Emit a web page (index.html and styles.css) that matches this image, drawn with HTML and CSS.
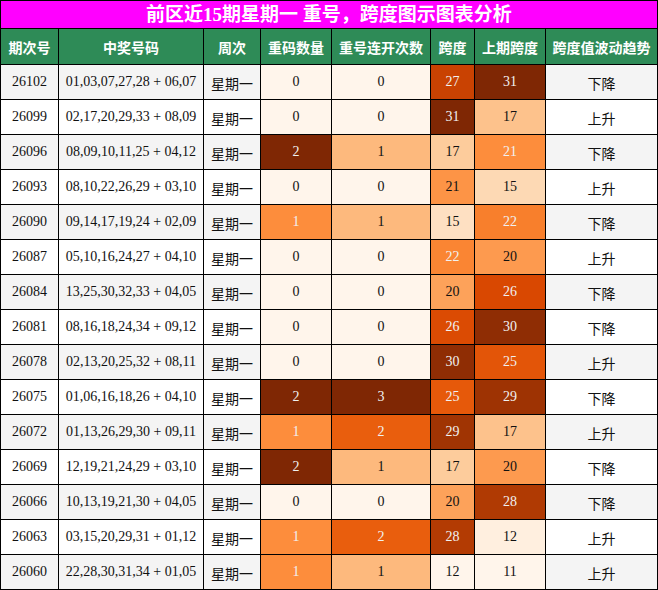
FILE: index.html
```html
<!DOCTYPE html>
<html lang="zh">
<head>
<meta charset="utf-8">
<link rel="stylesheet" href="styles.css">
</head>
<body>
<div class="sheet">
  <div class="title">前区近15期星期一 重号，跨度图示图表分析</div>
  <div class="hd">期次号</div><div class="hd">中奖号码</div><div class="hd">周次</div><div class="hd">重码数量</div><div class="hd">重号连开次数</div><div class="hd">跨度</div><div class="hd">上期跨度</div><div class="hd">跨度值波动趋势</div>

  <div class="row odd"><div class="c">26102</div><div class="c">01,03,07,27,28 + 06,07</div><div class="c cjk">星期一</div><div class="c" style="background:#fff5eb">0</div><div class="c" style="background:#fff5eb">0</div><div class="c lt" style="background:#c94202">27</div><div class="c lt" style="background:#7f2704">31</div><div class="c cjk">下降</div></div>
  <div class="row"><div class="c">26099</div><div class="c">02,17,20,29,33 + 08,09</div><div class="c cjk">星期一</div><div class="c" style="background:#fff5eb">0</div><div class="c" style="background:#fff5eb">0</div><div class="c lt" style="background:#7f2704">31</div><div class="c" style="background:#fdc28c">17</div><div class="c cjk">上升</div></div>
  <div class="row odd"><div class="c">26096</div><div class="c">08,09,10,11,25 + 04,12</div><div class="c cjk">星期一</div><div class="c lt" style="background:#7f2704">2</div><div class="c" style="background:#fdb97d">1</div><div class="c" style="background:#fdcc9c">17</div><div class="c lt" style="background:#fd8d3c">21</div><div class="c cjk">下降</div></div>
  <div class="row"><div class="c">26093</div><div class="c">08,10,22,26,29 + 03,10</div><div class="c cjk">星期一</div><div class="c" style="background:#fff5eb">0</div><div class="c" style="background:#fff5eb">0</div><div class="c" style="background:#fd9446">21</div><div class="c" style="background:#fdd9b4">15</div><div class="c cjk">上升</div></div>
  <div class="row odd"><div class="c">26090</div><div class="c">09,14,17,19,24 + 02,09</div><div class="c cjk">星期一</div><div class="c lt" style="background:#fd8d3c">1</div><div class="c" style="background:#fdb97d">1</div><div class="c" style="background:#fee0c2">15</div><div class="c lt" style="background:#f87f2c">22</div><div class="c cjk">下降</div></div>
  <div class="row"><div class="c">26087</div><div class="c">05,10,16,24,27 + 04,10</div><div class="c cjk">星期一</div><div class="c" style="background:#fff5eb">0</div><div class="c" style="background:#fff5eb">0</div><div class="c lt" style="background:#fa8533">22</div><div class="c" style="background:#fd9a4f">20</div><div class="c cjk">上升</div></div>
  <div class="row odd"><div class="c">26084</div><div class="c">13,25,30,32,33 + 04,05</div><div class="c cjk">星期一</div><div class="c" style="background:#fff5eb">0</div><div class="c" style="background:#fff5eb">0</div><div class="c" style="background:#fda25a">20</div><div class="c lt" style="background:#d94801">26</div><div class="c cjk">下降</div></div>
  <div class="row"><div class="c">26081</div><div class="c">08,16,18,24,34 + 09,12</div><div class="c cjk">星期一</div><div class="c" style="background:#fff5eb">0</div><div class="c" style="background:#fff5eb">0</div><div class="c lt" style="background:#db4b03">26</div><div class="c lt" style="background:#8f2d04">30</div><div class="c cjk">下降</div></div>
  <div class="row odd"><div class="c">26078</div><div class="c">02,13,20,25,32 + 08,11</div><div class="c cjk">星期一</div><div class="c" style="background:#fff5eb">0</div><div class="c" style="background:#fff5eb">0</div><div class="c lt" style="background:#8f2d04">30</div><div class="c lt" style="background:#e35508">25</div><div class="c cjk">上升</div></div>
  <div class="row"><div class="c">26075</div><div class="c">01,06,16,18,26 + 04,10</div><div class="c cjk">星期一</div><div class="c lt" style="background:#7f2704">2</div><div class="c lt" style="background:#7f2704">3</div><div class="c lt" style="background:#e6590a">25</div><div class="c lt" style="background:#9e3303">29</div><div class="c cjk">下降</div></div>
  <div class="row odd"><div class="c">26072</div><div class="c">01,13,26,29,30 + 09,11</div><div class="c cjk">星期一</div><div class="c lt" style="background:#fd8d3c">1</div><div class="c lt" style="background:#e95e0d">2</div><div class="c lt" style="background:#a03403">29</div><div class="c" style="background:#fdc28c">17</div><div class="c cjk">上升</div></div>
  <div class="row"><div class="c">26069</div><div class="c">12,19,21,24,29 + 03,10</div><div class="c cjk">星期一</div><div class="c lt" style="background:#7f2704">2</div><div class="c" style="background:#fdb97d">1</div><div class="c" style="background:#fdcc9c">17</div><div class="c" style="background:#fd9a4f">20</div><div class="c cjk">下降</div></div>
  <div class="row odd"><div class="c">26066</div><div class="c">10,13,19,21,30 + 04,05</div><div class="c cjk">星期一</div><div class="c" style="background:#fff5eb">0</div><div class="c" style="background:#fff5eb">0</div><div class="c" style="background:#fda25a">20</div><div class="c lt" style="background:#b03a03">28</div><div class="c cjk">下降</div></div>
  <div class="row"><div class="c">26063</div><div class="c">03,15,20,29,31 + 01,12</div><div class="c cjk">星期一</div><div class="c lt" style="background:#fd8d3c">1</div><div class="c lt" style="background:#e95e0d">2</div><div class="c lt" style="background:#b33b03">28</div><div class="c" style="background:#ffefdf">12</div><div class="c cjk">上升</div></div>
  <div class="row odd"><div class="c">26060</div><div class="c">22,28,30,31,34 + 01,05</div><div class="c cjk">星期一</div><div class="c lt" style="background:#fd8d3c">1</div><div class="c" style="background:#fdb97d">1</div><div class="c" style="background:#fff5eb">12</div><div class="c" style="background:#fff5eb">11</div><div class="c cjk">上升</div></div>
</div>
</body>
</html>
```
FILE: styles.css
```css
html, body {
  margin: 0;
  padding: 0;
  background: #ffffff;
}
.sheet {
  width: 658px;
  box-sizing: border-box;
  display: grid;
  grid-template-columns: 57px 144px 56px 70px 98px 43px 70px 111px;
  grid-template-rows: 27px 35px repeat(15, 34px);
  gap: 1px;
  padding: 1px;
  background: #000000;
  font-family: "Liberation Serif", "Noto Sans CJK SC", serif;
  font-size: 14px;
  color: #111111;
}
.title {
  grid-column: 1 / -1;
  background: #ff00ff;
  color: #ffffff;
  font-weight: bold;
  font-size: 19px;
  font-family: "Liberation Serif", "Noto Sans CJK SC", sans-serif;
  display: flex;
  align-items: center;
  justify-content: center;
  line-height: 1;
}
.hd {
  background: #2e8b57;
  color: #ffffff;
  font-weight: bold;
  font-family: "Noto Sans CJK SC", sans-serif;
  font-size: 14px;
  display: flex;
  align-items: center;
  justify-content: center;
}
.row {
  display: contents;
}
.c {
  background: #ffffff;
  display: flex;
  align-items: center;
  justify-content: center;
  white-space: nowrap;
}
.row.odd .c {
  background: #f4f4f4;
}
.c.cjk {
  font-family: "Noto Sans CJK SC", sans-serif;
  padding-top: 2px;
}
.c.lt {
  color: #f1f1f1;
}
```
